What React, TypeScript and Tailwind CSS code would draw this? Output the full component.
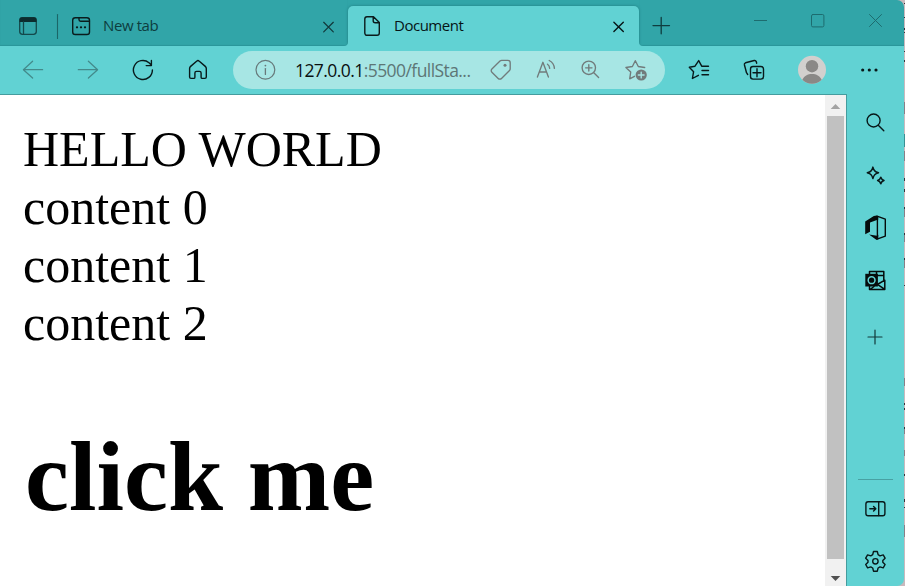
import type { ReactNode } from "react";

type GlyphProps = {
  x: number;
  y: number;
  w: number;
  h: number;
  color?: string;
  sw?: number;
  children: ReactNode;
};

// Window-space glyph: the view box is the glyph's own slice of the 905x586 window.
function Glyph({ x, y, w, h, color = "#0b2324", sw = 1.25, children }: GlyphProps) {
  return (
    <svg
      width={w}
      height={h}
      viewBox={`${x} ${y} ${w} ${h}`}
      fill="none"
      stroke={color}
      strokeWidth={sw}
      strokeLinecap="round"
      strokeLinejoin="round"
      className="block shrink-0"
    >
      {children}
    </svg>
  );
}

function TabStrip() {
  return (
    <div className="flex h-[46px] shrink-0 bg-[#31a5a8]">
      <div className="flex w-[348px] shrink-0 shadow-[inset_0_-1px_1px_#2b9699]">
        <Glyph x={0} y={0} w={66} h={46} color="#14494b" sw={1.3}>
          <rect x="19.7" y="17.7" width="16.6" height="16.6" rx="2.8" />
          <path d="M19.5 22V20a2.8 2.8 0 0 1 2.8-2.8h11.4a2.8 2.8 0 0 1 2.8 2.8v2z" fill="#0c2c2e" stroke="none" />
          <path d="M23.5 22v12" />
          <path d="M57.5 14.5v24" stroke="#1b6668" strokeWidth="1.1" />
        </Glyph>
        <Glyph x={66} y={0} w={37} h={46} color="#0a1c1d" sw={1.4}>
          <rect x="72.7" y="17.7" width="16.8" height="16.8" rx="2.6" />
          <path d="M79 17.8v1.8c0 1 .6 1.7 1.6 1.7h8.8" />
          <path d="M77 27.3h.01M81 27.3h.01M85 27.3h.01" strokeWidth="2.3" />
        </Glyph>
        <span className="mt-[13px] w-[211px] text-[15px] leading-6 tracking-[-0.4px] text-[#0d3d3f]">New tab</span>
        <Glyph x={314} y={0} w={34} h={46} color="#12393b" sw={1.25}>
          <path d="M323.7 22.3l9.6 9.6M333.3 22.3l-9.6 9.6" />
        </Glyph>
      </div>
      <div className="relative mt-[6px] flex h-10 w-[291px] shrink-0 rounded-t-[5px] bg-[#61d2d3] shadow-[0_0_3px_#217d80]">
        <Glyph x={348} y={6} w={46} h={40} color="#0b1a1b" sw={1.4}>
          <path d="M367 16.7h6.5l5.8 5.8v10.6a2.2 2.2 0 0 1-2.2 2.2H367a2.2 2.2 0 0 1-2.2-2.2V18.9a2.2 2.2 0 0 1 2.2-2.2zM373.2 17v3.8a2 2 0 0 0 2 2h3.8" />
        </Glyph>
        <span className="mt-[7px] w-[210px] text-[15px] leading-6 tracking-[-0.48px] text-[#061516]">Document</span>
        <Glyph x={604} y={6} w={34} h={40} color="#061516" sw={1.4}>
          <path d="M613.9 22.2l9.4 9.4M623.3 22.2l-9.4 9.4" />
        </Glyph>
        <svg className="absolute -left-1 bottom-0" width="4" height="4" viewBox="0 0 4 4">
          <path d="M4 0v4H0A4 4 0 0 0 4 0z" fill="#61d2d3" />
        </svg>
        <svg className="absolute -right-1 bottom-0" width="4" height="4" viewBox="0 0 4 4">
          <path d="M0 0v4h4A4 4 0 0 1 0 0z" fill="#61d2d3" />
        </svg>
      </div>
      <div className="flex flex-1 justify-between shadow-[inset_0_-1px_1px_#2b9699]">
        <Glyph x={639} y={0} w={46} h={46} color="#0f3d3f" sw={1.3}>
          <path d="M653 25.6h16.5M661.2 17.4v16.4" />
        </Glyph>
        <Glyph x={733} y={0} w={171} h={46} color="#1d6c6f" sw={1}>
          <path d="M754 20.5h13" strokeLinecap="butt" />
          <rect x="811.5" y="14.5" width="12.4" height="12.4" rx="1.4" />
          <path d="M869.5 14.5l12 12M881.5 14.5l-12 12" />
        </Glyph>
      </div>
    </div>
  );
}

function AddressBar() {
  return (
    <div className="ml-2 flex h-[38px] w-[432px] shrink-0 items-center rounded-full bg-[#a7e6e4]">
      <Glyph x={233} y={51} w={62} h={38} color="#67797a" sw={1.2}>
        <circle cx="265.4" cy="69.8" r="9.4" />
        <path d="M265.4 68.6v5.8" strokeWidth="1.3" />
        <path d="M265.4 65.6h.01" strokeWidth="1.8" />
      </Glyph>
      <span className="w-[189px] whitespace-nowrap text-[17.5px] leading-[38px] tracking-[-0.57px] text-[#5d7676]">
        <span className="text-[#0a1010]">127.0.0.1</span>:5500/fullSta...
      </span>
      <Glyph x={484} y={51} w={181} h={38} color="#717b7b" sw={1.35}>
        <path d="M501.7 60.4h6.2c1.3 0 2.3 1 2.3 2.3v6c0 .7-.3 1.3-.7 1.7l-8 8.1a2.3 2.3 0 0 1-3.3 0l-6.3-6.3a2.3 2.3 0 0 1 0-3.3l8.1-7.8c.5-.5 1-.7 1.7-.7z" />
        <circle cx="505" cy="65.3" r="1.5" fill="#717b7b" stroke="none" />
        <path d="M537.4 77l5.5-14.7 5.5 14.7M539.4 72h7" />
        <path d="M547.5 64.2c1.4 1 2.1 2.6 2.2 4.2M549.2 60.5c3.2 1.6 5 4.3 5.2 7.9" />
        <circle cx="588.8" cy="67.8" r="6.7" />
        <path d="M593.8 72.8l4.8 4.8M585.6 67.8h6.4M588.8 64.6V71" />
        <path d="M634.5 76.3l-4.8 2.5 1-6.7-4.8-4.6 6.5-1 2.9-5.8 3 5.8 6.4 1" />
        <circle cx="641.2" cy="75" r="5.6" fill="#717b7b" stroke="none" />
        <path d="M638.3 75h5.8M641.2 72.1v5.8" stroke="#a7e6e4" />
      </Glyph>
    </div>
  );
}

function Toolbar() {
  return (
    <div className="relative flex h-12 shrink-0 items-center bg-[#61d2d3]">
      <Glyph x={0} y={46} w={115} h={48} color="#438a8b" sw={1.25}>
        <path d="M42.6 69.7H23.6M32.6 61.2l-9.2 8.5 9.2 8.3" />
        <path d="M78.3 69.7h19M88.4 61.2l9.2 8.5-9.2 8.3" />
      </Glyph>
      <Glyph x={115} y={46} w={55} h={48} color="#08191a" sw={1.4}>
        <path d="M152.4 69.9a9.500 9.500 0 1 1-3.400-7.200l2.300 2.300M151.400 60.400v5.200h-5.200" />
      </Glyph>
      <Glyph x={170} y={46} w={55} h={48} color="#08191a" sw={1.4}>
        <path d="M196.600 61.200a2 2 0 0 1 2.700 0l6 5.200c.7.6 1 1.300 1 2.100V77c0 .8-.6 1.400-1.400 1.400h-2.600c-.7 0-1.200-.5-1.200-1.200V73c0-1-.6-1.600-1.600-1.600h-3c-1 0-1.600.6-1.600 1.600v4.200c0 .7-.5 1.200-1.200 1.200H191c-.8 0-1.400-.6-1.400-1.400v-8.500c0-.8.3-1.500 1-2.100z" />
      </Glyph>
      <AddressBar />
      <Glyph x={665} y={46} w={61} h={48} color="#08191a" sw={1.400}>
        <path d="M698.400 75.300l-6 3.200 1.200-6.800-4.300-4.500 5.700-1 3.700-5.600 3 5.500M701.800 66.300h6.700M702 70.500h6.500M702 74.800h6.500" />
      </Glyph>
      <Glyph x={726} y={46} w={55} h={48} color="#08191a" sw={1.400}>
        <rect x="750.500" y="66.500" width="13" height="12.600" rx="2.500" />
        <path d="M753 72.800h8M757 68.800v8M747.700 74.500l-1.200-1.800-2.100-8c-.2-.9.3-1.600 1.100-1.900l8.700-2.300c.9-.2 1.700.2 2 1l.5 1.700" />
      </Glyph>
      <Glyph x={781} y={46} w={62} h={48}>
        <circle cx="812" cy="69.800" r="14" fill="#d2d0ce" stroke="none" />
        <circle cx="812" cy="66.200" r="6.200" fill="#8a8886" stroke="none" />
        <path d="M802.300 79.800c1.800-3.800 5.400-5.800 9.700-5.800s7.900 2 9.700 5.800a14 14 0 0 1-19.400 0z" fill="#8a8886" stroke="none" />
      </Glyph>
      <Glyph x={843} y={46} w={61} h={48} color="#08191a" sw={3.200}>
        <path d="M862.700 70h.01M869.300 70h.01M876 70h.01" />
      </Glyph>
    </div>
  );
}

function Page() {
  return (
    <main className="flex w-[847px] shrink-0 border-t border-r border-[#459c9e] bg-white">
      <article className="flex-1 pl-[23px] pt-[25px] font-['Liberation_Serif',serif] text-[50px] leading-[58px] text-black">
        <div>HELLO WORLD</div>
        <div>content 0</div>
        <div>content 1</div>
        <div>content 2</div>
        <h1 className="ml-[2px] mt-[67px] text-[99px] font-bold leading-[116px]">click me</h1>
      </article>
      <div className="flex w-[21px] flex-col items-center bg-[#f1f1f1]">
        <svg width="21" height="21" viewBox="825 95 21 21" className="shrink-0">
          <path d="M830.700 109h9.600L835.500 104z" fill="#a3a3a3" />
        </svg>
        <div className="h-[443px] w-[17px] bg-[#c1c1c1]" />
        <svg width="21" height="27" viewBox="825 559 21 27" className="shrink-0">
          <path d="M830.700 576h9.600L835.500 581z" fill="#505050" />
        </svg>
      </div>
    </main>
  );
}

function Sidebar() {
  return (
    <aside className="flex w-[57px] shrink-0 flex-col bg-[#61d2d3]">
      <Glyph x={847} y={94} w={57} h={55} color="#08191a" sw={1.400}>
        <circle cx="873.600" cy="120.500" r="6.500" />
        <path d="M878.500 125.400l5.300 5.300" />
      </Glyph>
      <Glyph x={847} y={149} w={57} h={53} color="#08191a" sw={1.500}>
        <path d="M872.900 167.100c1 3.600 2 4.600 5.600 5.700-3.600 1.100-4.600 2.100-5.600 5.700-1-3.600-2-4.600-5.600-5.700 3.600-1.100 4.600-2.100 5.600-5.700z" />
        <path d="M880.800 177.300c.6 2 1.200 2.600 3.200 3.200-2 .6-2.600 1.200-3.200 3.200-.6-2-1.200-2.600-3.200-3.200 2-.6 2.600-1.200 3.200-3.200z" />
      </Glyph>
      <Glyph x={847} y={202} w={57} h={53} color="#050c0c" sw={1.400}>
        <path d="M865.200 221.600l8.600-5.600 3-.6 1.500.8v3.200l-8.300 3v9.300l-4.800 2.500zM869 234.400l8 1.400 1.300-1v4.500l-2 .500z" fill="#050c0c" stroke="none" />
        <path d="M877 216.200l8.300 3v16.900l-8.300 3.100M877.400 219v17.500" />
      </Glyph>
      <Glyph x={847} y={255} w={57} h={53} color="#050c0c" sw={1.500}>
        <path d="M869.500 274v-2.500h14.300v8.800M869.500 286.500v3h15.300v-9.300l-7.500 4.300M870 289.500l4-3M878.500 285.200l6 4M876.500 271.500v4M876.500 275.500h7" />
        <rect x="865.300" y="273.800" width="12.600" height="12.700" fill="#050c0c" stroke="none" />
        <circle cx="871.600" cy="280.200" r="3.400" stroke="#61d2d3" strokeWidth="1.500" />
      </Glyph>
      <Glyph x={847} y={308} w={57} h={60} color="#12393a" sw={1.200}>
        <path d="M868 337h14M875 330v14" />
      </Glyph>
      <div className="flex-1" />
      <div className="mx-[11px] h-px shrink-0 bg-[#48a1a3]" />
      <Glyph x={847} y={480} w={57} h={56} color="#08191a" sw={1.400}>
        <rect x="865.900" y="501.700" width="19" height="14" rx="2.200" />
        <path d="M878.700 502v13.500M869.800 508.700h5.800M873.600 506.500l2.200 2.200-2.200 2.200" />
      </Glyph>
      <Glyph x={847} y={536} w={57} h={50} color="#08191a" sw={1.400}>
        <circle cx="875.400" cy="561.300" r="2.700" />
        <path d="M873.500 551.500h3.800l.8 3.200 1.900 1.100 3.200-.9 1.900 3.300-2.300 2.300v1.700l2.300 2.300-1.900 3.300-3.200-.9-1.900 1.100-.8 3.200h-3.800l-.8-3.200-1.900-1.100-3.200.9-1.900-3.300 2.300-2.300v-1.700l-2.300-2.300 1.900-3.300 3.200.9 1.900-1.100z" />
      </Glyph>
    </aside>
  );
}

// Fragments of the window behind, visible along the right edge.
function Backdrop() {
  return (
    <svg width="1" height="586" viewBox="0 0 1 586" className="block shrink-0" strokeWidth="1">
      <path d="M.5 102v12M.5 151v10M.5 207v10M.5 233v9M.5 259v9M.5 378v8M.5 427v7M.5 450v6M.5 525v12" stroke="#8b7f86" />
      <path d="M.5 134v13" stroke="#3c8f92" />
      <path d="M.5 3v1M.5 17v1M.5 28v2M.5 32v1M.5 51v1M.5 60v2M.5 178v3M.5 189v3M.5 207v2M.5 233v2M.5 258v2M.5 285v1M.5 403v2M.5 408v2M.5 427v2M.5 474v2M.5 499v3M.5 507v1" stroke="#3b3338" />
    </svg>
  );
}

export default function App() {
  return (
    <div className="flex h-[586px] w-[905px] overflow-hidden bg-[#c9b9bd] font-['Open_Sans','Noto_Sans',sans-serif]">
      <div className="flex w-[904px] shrink-0 flex-col overflow-hidden rounded-r-[7px]">
        <TabStrip />
        <Toolbar />
        <div className="flex h-[492px] shrink-0">
          <Page />
          <Sidebar />
        </div>
      </div>
      <Backdrop />
    </div>
  );
}
